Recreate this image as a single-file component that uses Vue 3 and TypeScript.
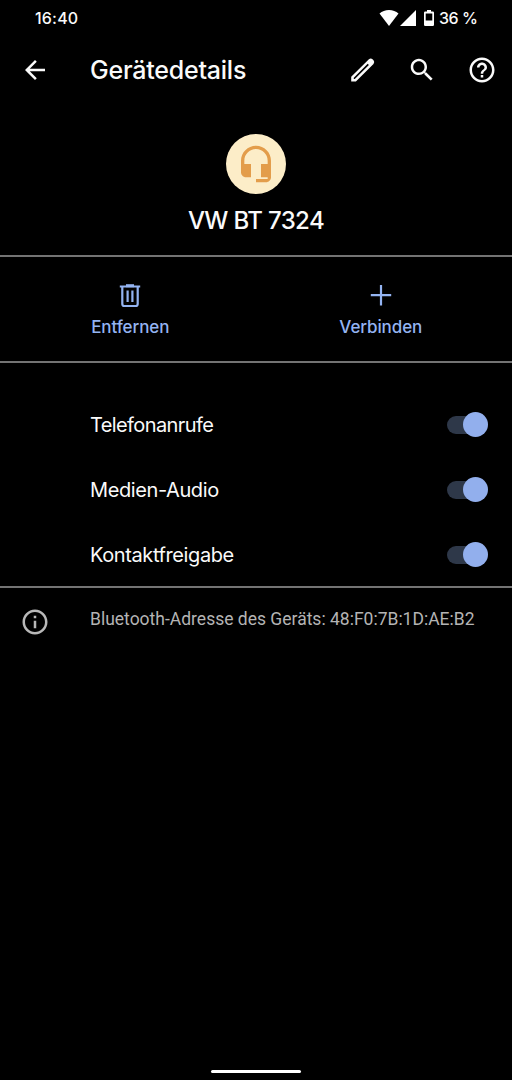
<script setup lang="ts">
import { ref } from 'vue'

interface Profile {
  id: string
  label: string
  enabled: boolean
}

const profiles = ref<Profile[]>([
  { id: 'calls', label: 'Telefonanrufe', enabled: true },
  { id: 'media', label: 'Medien-Audio', enabled: true },
  { id: 'contacts', label: 'Kontaktfreigabe', enabled: true },
])
</script>

<template>
  <div class="screen">
    <div class="status">
      <span class="time">16:40</span>
      <svg width="20" height="16" viewBox="0 0 20 16"><path d="M10 16 .5 3.600C3 1.300 6.300 0 10 0s7 1.300 9.500 3.600z" fill="#fff" /></svg>
      <svg class="signal" width="16" height="16" viewBox="0 0 16 16"><path d="M16 0v16H0z" fill="#fff" /></svg>
      <svg class="battery" width="10" height="16" viewBox="0 0 10 16"><path fill-rule="evenodd" d="M3 0h4v1.600h1.800q1.200 0 1.200 1.200V14.800q0 1.200-1.200 1.200H1.200Q0 16 0 14.800V2.800Q0 1.600 1.200 1.600H3zM1.700 3.400v7.200h6.600V3.400z" fill="#fff" /></svg>
      <span class="percent">36 %</span>
    </div>

    <header class="bar">
      <button class="icon back" aria-label="Zurück"><svg viewBox="0 0 24 24"><path d="M20 11H7.830l5.590-5.590L12 4l-8 8 8 8 1.410-1.410L7.830 13H20v-2z" /></svg></button>
      <h1>Gerätedetails</h1>
      <button class="icon" aria-label="Bearbeiten"><svg viewBox="0 0 30 30"><path fill-rule="evenodd" d="M4.200 26.500v-4.700L21.900 4.300q1.900-1.500 3.600 0l1 1q1.500 1.700 0 3.600L8.900 26.500zM6.800 24h1L21.900 10 20.700 8.800 6.800 22.800z" /></svg></button>
      <button class="icon" aria-label="Suchen"><svg viewBox="0 0 24 24"><path d="M15.500 14h-.79l-.28-.27C15.410 12.590 16 11.110 16 9.500 16 5.910 13.090 3 9.500 3S3 5.910 3 9.500 5.910 16 9.500 16c1.610 0 3.090-.59 4.230-1.570l.27.28v.79l5 4.990L20.490 19l-4.990-5zm-6 0C7.010 14 5 11.990 5 9.500S7.010 5 9.500 5 14 7.010 14 9.500 11.990 14 9.500 14z" /></svg></button>
      <button class="icon" aria-label="Hilfe"><svg viewBox="0 0 24 24"><path d="M11 18h2v-2h-2v2zm1-16C6.480 2 2 6.480 2 12s4.480 10 10 10 10-4.480 10-10S17.520 2 12 2zm0 18c-4.410 0-8-3.590-8-8s3.590-8 8-8 8 3.590 8 8-3.590 8-8 8zm0-14c-2.210 0-4 1.790-4 4h2c0-1.100.9-2 2-2s2 .9 2 2c0 2-3 1.750-3 5h2c0-2.250 3-2.500 3-5 0-2.210-1.790-4-4-4z" /></svg></button>
    </header>

    <section class="device">
      <div class="avatar">
        <svg width="40" height="40" viewBox="0 0 24 24"><path fill="#e39d4b" d="M12 1c-4.970 0-9 4.030-9 9v7c0 1.660 1.340 3 3 3h3v-8H5v-2c0-3.870 3.130-7 7-7s7 3.130 7 7v2h-4v8h4v1h-7v2h6c1.660 0 3-1.340 3-3V10c0-4.970-4.030-9-9-9z" /></svg>
      </div>
      <h2>VW BT 7324</h2>
    </section>

    <section class="actions">
      <button class="action">
        <svg width="22" height="24" viewBox="0 0 22 24"><path fill="none" stroke="#94b4f2" stroke-width="2.200" d="M.8 2.500h20.400M3.300 2.500V20q0 2 2 2h11.400q2 0 2-2V2.500M8.600 6.500v11.500M13.400 6.500v11.500" /><path d="M7 .2h8v3H7z" fill="#94b4f2" /></svg>
        <span>Entfernen</span>
      </button>
      <button class="action">
        <svg width="22" height="24" viewBox="0 0 22 24"><path fill="none" stroke="#94b4f2" stroke-width="2.200" d="M11 1v20.400M.8 11.200h20.400" /></svg>
        <span>Verbinden</span>
      </button>
    </section>

    <section class="profiles">
      <label v-for="p in profiles" :key="p.id" class="profile">
        <span :class="p.id">{{ p.label }}</span>
        <input v-model="p.enabled" type="checkbox" class="switch" />
      </label>
    </section>

    <footer class="info">
      <svg width="30" height="30" viewBox="0 0 24 24"><path fill="#b8b8b8" d="M11 7h2v2h-2zm0 4h2v6h-2zm1-9C6.480 2 2 6.480 2 12s4.480 10 10 10 10-4.480 10-10S17.520 2 12 2zm0 18c-4.410 0-8-3.590-8-8s3.590-8 8-8 8 3.590 8 8-3.590 8-8 8z" /></svg>
      <span>Bluetooth-Adresse des Geräts: 48:F0:7B:1D:AE:B2</span>
    </footer>
    <div class="home"></div>
  </div>
</template>

<style>
body {
  margin: 0;
  background: #000;
}
</style>

<style scoped>
.screen {
  width: 512px;
  height: 1080px;
  box-sizing: border-box;
  display: flex;
  flex-direction: column;
  overflow: hidden;
  background: #000;
  color: #fafafa;
  font-family: Inter, "Open Sans", sans-serif;
  white-space: nowrap;
}
svg {
  display: block;
  flex: none;
}
button {
  border: 0;
  padding: 0;
  background: none;
  font: inherit;
  color: inherit;
}
.status {
  height: 36px;
  display: flex;
  align-items: center;
  padding: 0 35px;
  font-size: 16px;
  font-weight: 500;
}
.time {
  flex: 1;
  letter-spacing: 0.2px;
}
.signal {
  margin-left: 1px;
}
.battery {
  margin-left: 8px;
}
.percent {
  margin-left: 5px;
  width: 38px;
  letter-spacing: -0.5px;
}
.bar {
  height: 67px;
  display: flex;
  align-items: center;
  padding: 0 15px 0 20px;
}
.icon {
  width: 30px;
  height: 30px;
  margin-left: 30px;
}
.icon svg {
  width: 30px;
  height: 30px;
  fill: #fafafa;
}
.icon.back {
  margin: 0 40px 0 0;
}
h1 {
  flex: 1;
  margin: 0;
  font-size: 25px;
  line-height: 30px;
  font-weight: 500;
  letter-spacing: -0.23px;
}
.device {
  height: 154px;
  display: flex;
  flex-direction: column;
  align-items: center;
  padding-top: 31px;
  box-sizing: border-box;
  border-bottom: 2px solid #737373;
}
.avatar {
  width: 60px;
  height: 60px;
  border-radius: 50%;
  background: #fcedc8;
  display: grid;
  place-items: center;
}
h2 {
  margin: 12px 0 0;
  font-size: 24px;
  line-height: 30px;
  font-weight: 500;
  letter-spacing: -0.65px;
}
.actions {
  height: 106px;
  box-sizing: border-box;
  display: flex;
  padding: 0 6px 0 5px;
  border-bottom: 2px solid #737373;
}
.action {
  flex: 1;
  display: flex;
  flex-direction: column;
  align-items: center;
  padding-top: 27px;
  color: #94b4f2;
  font-size: 17px;
  line-height: 22px;
  font-weight: 500;
  letter-spacing: -0.1px;
}
.action span {
  margin-top: 8px;
}
.profiles {
  height: 225px;
  box-sizing: border-box;
  padding: 29px 24px 0 90px;
  border-bottom: 2px solid #737373;
}
.profile {
  height: 65px;
  display: flex;
  align-items: center;
  justify-content: space-between;
  font-size: 20px;
  letter-spacing: -0.4px;
}
.calls {
  letter-spacing: -0.6px;
}
.switch {
  appearance: none;
  margin: 0;
  width: 41px;
  height: 25px;
  display: flex;
  align-items: center;
}
.switch::before {
  content: "";
  width: 36px;
  height: 18px;
  flex: none;
  border-radius: 9px;
  background: #2e3849;
}
.switch::after {
  content: "";
  width: 25px;
  height: 25px;
  flex: none;
  margin-left: -20px;
  border-radius: 50%;
  background: #92afed;
}
.switch:not(:checked)::after {
  margin-left: -36px;
}
.info {
  display: flex;
  padding: 18px 0 0 20px;
  font-family: Roboto, sans-serif;
  font-size: 17.5px;
  line-height: 26px;
  color: #b4b4b4;
}
.info svg {
  margin-top: 1px;
}
.info span {
  margin-left: 40px;
}
.home {
  width: 90px;
  height: 3px;
  border-radius: 2px;
  background: #fff;
  margin: auto auto 7px;
}
</style>
